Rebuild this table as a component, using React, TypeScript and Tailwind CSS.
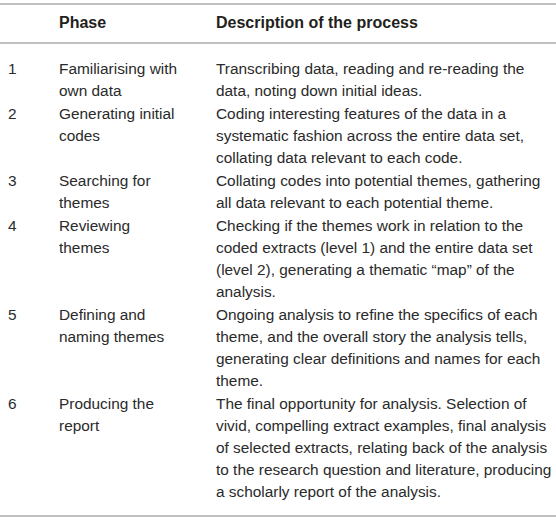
const rows = [
  {
    n: "1",
    phase: ["Familiarising with", "own data"],
    desc: ["Transcribing data, reading and re-reading the", "data, noting down initial ideas."],
  },
  {
    n: "2",
    phase: ["Generating initial", "codes"],
    desc: [
      "Coding interesting features of the data in a",
      "systematic fashion across the entire data set,",
      "collating data relevant to each code.",
    ],
  },
  {
    n: "3",
    phase: ["Searching for", "themes"],
    desc: ["Collating codes into potential themes, gathering", "all data relevant to each potential theme."],
  },
  {
    n: "4",
    phase: ["Reviewing", "themes"],
    desc: [
      "Checking if the themes work in relation to the",
      "coded extracts (level 1) and the entire data set",
      "(level 2), generating a thematic \u201cmap\u201d of the",
      "analysis.",
    ],
  },
  {
    n: "5",
    phase: ["Defining and", "naming themes"],
    desc: [
      "Ongoing analysis to refine the specifics of each",
      "theme, and the overall story the analysis tells,",
      "generating clear definitions and names for each",
      "theme.",
    ],
  },
  {
    n: "6",
    phase: ["Producing the", "report"],
    desc: [
      "The final opportunity for analysis. Selection of",
      "vivid, compelling extract examples, final analysis",
      "of selected extracts, relating back of the analysis",
      "to the research question and literature, producing",
      "a scholarly report of the analysis.",
    ],
  },
]

const Lines = ({ lines }: { lines: string[] }) => (
  <div className="flex flex-col">
    {lines.map((l) => (
      <span key={l} className="whitespace-nowrap">
        {l}
      </span>
    ))}
  </div>
)

export default function App() {
  return (
    <div className="w-[556px] h-[521px] bg-white pt-[3px] text-[15.4px] leading-[22px] text-[#2a2a2a] font-['Liberation_Sans',Arial,sans-serif]">
      <div className="h-[2px] bg-[#c0c0c0]" />
      {/* header */}
      <div className="grid grid-cols-[59px_157px_1fr] pt-[7px] pb-[8px] font-bold text-[16px] text-[#231f20]">
        <div />
        <div>Phase</div>
        <div>Description of the process</div>
      </div>
      <div className="h-[2px] bg-[#c0c0c0]" />
      {/* body */}
      <div className="flex flex-col gap-y-[1px] pt-[14px] pb-[12px]">
        {rows.map((r) => (
          <div key={r.n} className="grid grid-cols-[59px_157px_1fr]">
            <div className="pl-[8px]">{r.n}</div>
            <Lines lines={r.phase} />
            <Lines lines={r.desc} />
          </div>
        ))}
      </div>
      <div className="h-[2px] bg-[#c0c0c0]" />
    </div>
  )
}
